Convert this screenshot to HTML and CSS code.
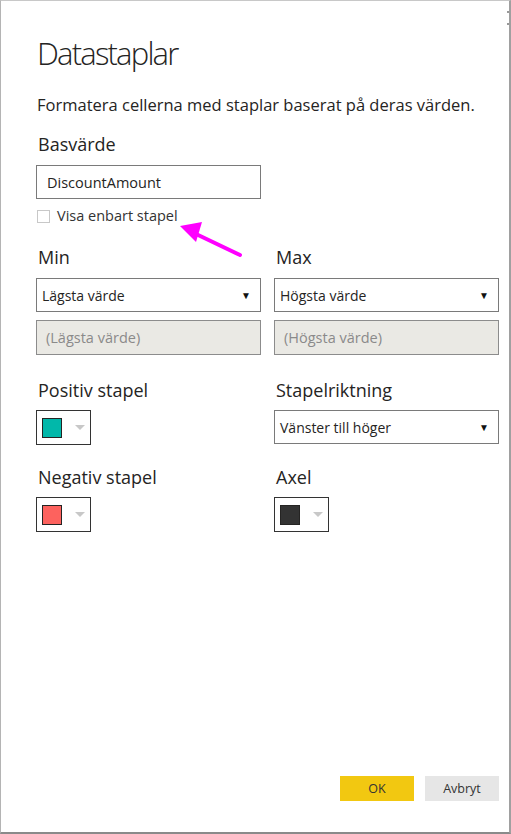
FILE: index.html
```html
<!DOCTYPE html>
<html lang="sv">
<head>
<meta charset="utf-8">
<link rel="stylesheet" href="styles.css">
</head>
<body>
<div class="dialog">
  <span class="grip g1"></span><span class="grip g2"></span>
  <h1 class="title">Datastaplar</h1>
  <p class="desc">Formatera cellerna med staplar baserat på deras värden.</p>

  <div class="label">Basvärde</div>
  <div class="field">DiscountAmount</div>
  <label class="check"><span class="box"></span><span>Visa enbart stapel</span></label>
  <svg class="pointer" width="70" height="40" viewBox="0 0 70 40">
    <line x1="66" y1="36" x2="22" y2="15" stroke="#ff00ff" stroke-width="4" stroke-linecap="round"/>
    <polygon points="6,7 28,3 22,23" fill="#ff00ff"/>
  </svg>

  <div class="grid two">
    <div class="col">
      <div class="label">Min</div>
      <div class="select"><span>Lägsta värde</span><span class="caret">▼</span></div>
      <div class="field disabled">(Lägsta värde)</div>
    </div>
    <div class="col">
      <div class="label">Max</div>
      <div class="select"><span>Högsta värde</span><span class="caret">▼</span></div>
      <div class="field disabled">(Högsta värde)</div>
    </div>
  </div>

  <div class="grid three">
    <div class="col">
      <div class="label">Positiv stapel</div>
      <div class="picker"><span class="swatch teal"></span><span class="pcaret"></span></div>
    </div>
    <div class="col">
      <div class="label">Stapelriktning</div>
      <div class="select"><span>Vänster till höger</span><span class="caret">▼</span></div>
    </div>
  </div>

  <div class="grid four">
    <div class="col">
      <div class="label">Negativ stapel</div>
      <div class="picker"><span class="swatch red"></span><span class="pcaret"></span></div>
    </div>
    <div class="col">
      <div class="label">Axel</div>
      <div class="picker"><span class="swatch dark"></span><span class="pcaret"></span></div>
    </div>
  </div>

  <div class="actions">
    <button class="btn ok">OK</button>
    <button class="btn cancel">Avbryt</button>
  </div>
</div>
</body>
</html>
```
FILE: styles.css
```css
html, body { margin: 0; padding: 0; background: #fff; }
body { width: 511px; height: 834px; overflow: hidden; font-family: "Open Sans", "Noto Sans", sans-serif; color: #252423; }
.dialog {
  position: relative;
  box-sizing: border-box;
  width: 511px; height: 834px;
  border-top: 1px solid #c8c8c8;
  border-left: 1px solid #b4b4b4;
  border-right: 2px solid #a0a0a0;
  border-bottom: 2px solid #8a8a8a;
  padding: 0 10px 0 35px;
  display: flex; flex-direction: column;
}
.grip { position: absolute; right: 0; width: 2px; height: 2px; background: #999; }
.g1 { top: 10px; } .g2 { top: 22px; }
.title { margin: 30px 0 0 1px; font-size: 31px; font-weight: 300; line-height: 44px; color: #252423; letter-spacing: -1.8px; }
.desc { margin: 19px 0 0 1px; font-size: 16.5px; line-height: 22px; color: #252423; }
.label { font-size: 18px; line-height: 24px; color: #252423; margin: 0 0 0 2px; }
.desc + .label { margin-top: 16px; }
.field {
  box-sizing: border-box; width: 225px; height: 34px;
  border: 1px solid #7a7a7a; padding: 0 10px; margin-top: 9px;
  display: flex; align-items: center; font-size: 14.5px; color: #252423;
}
.field.disabled { background: #eae9e4; border-color: #8c8c8c; color: #8a8a8a; margin-top: 8px; height: 35px; padding: 0 9px; }
.check { display: flex; align-items: center; gap: 7px; margin-top: 9px; margin-left: 1px; font-size: 14.5px; color: #333; line-height: 16px; }
.box { border: 1px solid #c8c8c8; box-sizing: border-box; width: 13px; height: 13px; }
.pointer { position: absolute; left: 173px; top: 218px; }
.grid { display: grid; grid-template-columns: 225px 225px; column-gap: 13px; align-items: start; }
.two { margin-top: 21px; }
.three { margin-top: 23px; }
.four { margin-top: 20px; }
.select {
  box-sizing: border-box; width: 225px; height: 34px; margin-top: 9px;
  border: 1px solid #7a7a7a; padding: 0 9px 0 5px;
  display: flex; align-items: center; justify-content: space-between;
  font-size: 14px; color: #252423;
}
.three .select { margin-top: 8px; }
.caret { font-size: 10px; color: #111; }
.picker {
  box-sizing: border-box; width: 55px; height: 35px; margin-top: 8px;
  border: 1px solid #333; display: flex; align-items: center; padding-left: 5px; gap: 13px;
}
.swatch { width: 20px; height: 20px; box-sizing: border-box; border: 1px solid #252423; }
.teal { background: #01b8aa; }
.red { background: #fd625e; }
.dark { background: #333333; }
.pcaret { width: 0; height: 0; border-left: 5px solid transparent; border-right: 5px solid transparent; border-top: 5px solid #c8c8c8; }
.actions { margin-top: auto; margin-bottom: 31px; display: flex; justify-content: flex-end; gap: 11px; }
.btn { width: 74px; height: 25px; border: 0; font-family: inherit; font-size: 12.5px; color: #333; padding: 0; }
.ok { background: #f2c811; }
.cancel { background: #e6e6e6; }
```
